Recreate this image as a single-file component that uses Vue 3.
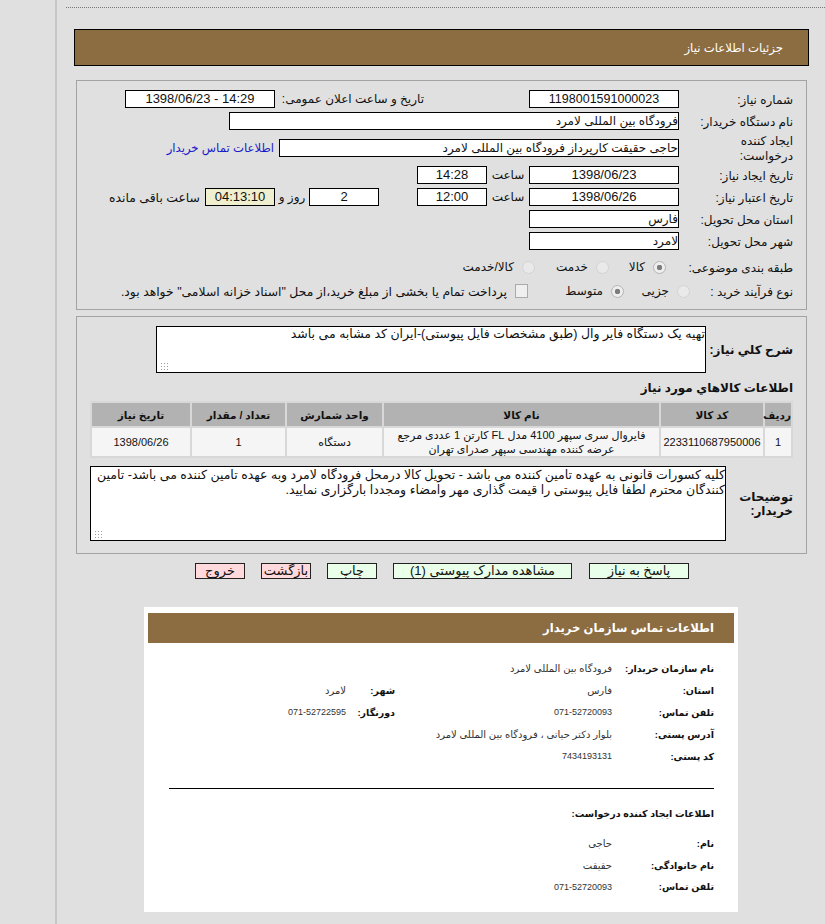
<script setup>
const items = [
  {
    row: "1",
    code: "2233110687950006",
    name: "فایروال سری سپهر 4100 مدل FL کارتن 1 عددی مرجع عرضه کننده مهندسی سپهر صدرای تهران",
    unit: "دستگاه",
    qty: "1",
    date: "1398/06/26",
  },
];

const buttons = [
  { text: "پاسخ به نیاز", cls: "go w-reply" },
  { text: "مشاهده مدارک پیوستی (1)", cls: "go w-docs" },
  { text: "چاپ", cls: "go w-small" },
  { text: "بازگشت", cls: "stop w-small" },
  { text: "خروج", cls: "stop w-small" },
];

const creator = [
  { label: "نام:", value: "حاجی", num: false },
  { label: "نام خانوادگی:", value: "حقیقت", num: false },
  { label: "تلفن تماس:", value: "071-52720093", num: true },
];
</script>

<template>
  <div class="page" dir="rtl">
    <div class="dots"></div>
    <div class="title">جزئیات اطلاعات نیاز</div>

    <section class="panel top">
      <div class="row">
        <label class="lbl">شماره نیاز:</label>
        <div class="box mid long">1198001591000023</div>
        <label class="pub">تاریخ و ساعت اعلان عمومی:</label>
        <div class="box mid">14:29 - 1398/06/23</div>
      </div>
      <div class="row">
        <label class="lbl">نام دستگاه خریدار:</label>
        <div class="box start w-org">فرودگاه بین المللی لامرد</div>
      </div>
      <div class="row tall">
        <label class="lbl">ایجاد کننده درخواست:</label>
        <div class="box start w-creator">حاجی حقیقت کارپرداز فرودگاه بین المللی لامرد</div>
        <a class="link">اطلاعات تماس خریدار</a>
      </div>
      <div class="row">
        <label class="lbl">تاریخ ایجاد نیاز:</label>
        <div class="box mid">1398/06/23</div>
        <span class="hour">ساعت</span>
        <div class="box time">14:28</div>
      </div>
      <div class="row">
        <label class="lbl">تاریخ اعتبار نیاز:</label>
        <div class="box mid">1398/06/26</div>
        <span class="hour">ساعت</span>
        <div class="box time">12:00</div>
        <div class="box days">2</div>
        <span class="day-text">روز و</span>
        <div class="box timer">04:13:10</div>
        <span class="left-text">ساعت باقی مانده</span>
      </div>
      <div class="row">
        <label class="lbl">استان محل تحویل:</label>
        <div class="box start mid-w">فارس</div>
      </div>
      <div class="row">
        <label class="lbl">شهر محل تحویل:</label>
        <div class="box start mid-w">لامرد</div>
      </div>
      <div class="row choice first">
        <label class="lbl w-cat">طبقه بندی موضوعی:</label>
        <input class="radio on" type="radio" disabled />
        <span class="opt w-kala">کالا</span>
        <input class="radio" type="radio" disabled />
        <span class="opt w-khedmat">خدمت</span>
        <input class="radio" type="radio" disabled />
        <span class="opt">کالا/خدمت</span>
      </div>
      <div class="row choice">
        <label class="lbl w-proc">نوع فرآیند خرید :</label>
        <input class="radio" type="radio" disabled />
        <span class="opt w-jozei">جزیی</span>
        <input class="radio on" type="radio" disabled />
        <span class="opt w-motavaset">متوسط</span>
        <input class="check" type="checkbox" disabled />
        <span class="opt note">پرداخت تمام یا بخشی از مبلغ خرید،از محل "اسناد خزانه اسلامی" خواهد بود.</span>
      </div>
    </section>

    <section class="panel bottom">
      <div class="desc">
        <label class="lbl-b w-need">شرح کلي نياز:</label>
        <div class="area-wrap">
          <textarea class="area area-need" readonly>تهیه یک دستگاه فایر وال (طبق مشخصات فایل پیوستی)-ایران کد مشابه می باشد</textarea>
        </div>
      </div>
      <h3 class="goods">اطلاعات کالاهاي مورد نياز</h3>
      <table class="goods-table">
        <thead>
          <tr>
            <th class="c-row">ردیف</th>
            <th class="c-code">کد کالا</th>
            <th class="c-name">نام کالا</th>
            <th class="c-unit">واحد شمارش</th>
            <th class="c-qty">تعداد / مقدار</th>
            <th>تاریخ نیاز</th>
          </tr>
        </thead>
        <tbody>
          <tr v-for="item in items" :key="item.code">
            <td>{{ item.row }}</td>
            <td>{{ item.code }}</td>
            <td>{{ item.name }}</td>
            <td>{{ item.unit }}</td>
            <td>{{ item.qty }}</td>
            <td>{{ item.date }}</td>
          </tr>
        </tbody>
      </table>
      <div class="desc buyer">
        <label class="lbl-b w-buyer">توضیحات خریدار:</label>
        <div class="area-wrap">
          <textarea class="area area-buyer" readonly>کلیه کسورات قانونی به عهده تامین کننده می باشد - تحویل کالا درمحل فرودگاه لامرد وبه عهده تامین کننده می باشد- تامین کنندگان محترم لطفا فایل پیوستی را قیمت گذاری مهر وامضاء ومجددا بارگزاری نمایید.</textarea>
        </div>
      </div>
    </section>

    <div class="actions">
      <button v-for="b in buttons" :key="b.text" type="button" :class="b.cls">{{ b.text }}</button>
    </div>

    <section class="card">
      <div class="card-head">اطلاعات تماس سازمان خریدار</div>
      <div class="card-body">
        <div class="c-line">
          <b class="c-lbl">نام سازمان خریدار:</b>
          <span class="c-val">فرودگاه بین المللی لامرد</span>
        </div>
        <div class="c-line">
          <b class="c-lbl">استان:</b>
          <span class="c-val wide">فارس</span>
          <b class="c-lbl2">شهر:</b>
          <span class="c-val">لامرد</span>
        </div>
        <div class="c-line">
          <b class="c-lbl">تلفن تماس:</b>
          <span class="c-val wide num">071-52720093</span>
          <b class="c-lbl2">دورنگار:</b>
          <span class="c-val num">071-52722595</span>
        </div>
        <div class="c-line">
          <b class="c-lbl">آدرس پستی:</b>
          <span class="c-val">بلوار دکتر حیاتی ، فرودگاه بین المللی لامرد</span>
        </div>
        <div class="c-line">
          <b class="c-lbl">کد پستی:</b>
          <span class="c-val num">7434193131</span>
        </div>
        <hr class="rule" />
        <h4 class="sub">اطلاعات ایجاد کننده درخواست:</h4>
        <div v-for="c in creator" :key="c.label" class="c-line tight">
          <b class="c-lbl">{{ c.label }}</b>
          <span class="c-val" :class="{ num: c.num }">{{ c.value }}</span>
        </div>
      </div>
    </section>
  </div>
</template>

<style>
html,
body {
  background: #e0e0e0;
}
</style>

<style scoped>
.page {
  box-sizing: border-box;
  width: 770px;
  min-height: 924px;
  margin-left: 55px;
  border-left: 2px solid #c6c6c6;
  padding: 7px 0 12px;
  direction: rtl;
  font-family: "Liberation Sans", "DejaVu Sans", sans-serif;
  font-size: 12px;
  color: #111;
  overflow: hidden;
}

.dots {
  height: 0;
  margin-left: 9px;
  border-top: 1px dotted #777;
}

.title {
  box-sizing: border-box;
  height: 37px;
  margin: 21px 16px 0 17px;
  padding-right: 25px;
  background: #8c6c41;
  border: 1px solid #000;
  color: #fff;
  line-height: 36px;
  font-size: 11.7px;
}

.panel {
  box-sizing: border-box;
  margin: 0 18px 0 19px;
  border: 1px solid #a3a3a3;
}

.panel.top {
  height: 230px;
  margin-top: 14px;
  padding-top: 7px;
}

.panel.bottom {
  height: 238px;
  margin-top: 6px;
  padding-top: 9px;
}

.row {
  display: flex;
  align-items: center;
  height: 22px;
  padding-right: 13px;
}

.row.tall {
  height: 32px;
}

.row.choice {
  height: 24px;
}

.row.first {
  margin-top: 3px;
}

.lbl {
  box-sizing: border-box;
  flex: none;
  width: 114px;
  padding-top: 2px;
  padding-left: 8px;
  line-height: 15px;
}

.lbl.w-cat {
  width: 127px;
  padding-left: 0;
}

.lbl.w-proc {
  width: 103px;
  padding-left: 0;
}

.box {
  box-sizing: border-box;
  flex: none;
  height: 18px;
  background: #fff;
  border: 1px solid #000;
  line-height: 16px;
  font-size: 13px;
}

.box.start {
  font-size: 12px;
}

.box.long {
  font-size: 12.5px;
}

.mid {
  width: 150px;
  text-align: center;
}

.mid-w {
  width: 150px;
}

.pub {
  flex: none;
  width: 149px;
  margin-right: 105px;
  white-space: nowrap;
}

.w-org {
  width: 450px;
}

.w-creator {
  width: 400px;
}

.link {
  margin-right: 5px;
  color: #1a1acb;
  font-size: 11.7px;
}

.hour {
  flex: none;
  width: 42px;
  text-align: center;
}

.time {
  width: 70px;
  text-align: center;
}

.days {
  width: 70px;
  margin-right: 38px;
  text-align: center;
}

.day-text {
  flex: none;
  width: 34px;
  text-align: center;
}

.timer {
  width: 70px;
  background: #efefcf;
  text-align: center;
}

.left-text {
  margin-right: 5px;
  font-size: 12.4px;
}

.radio,
.check {
  appearance: none;
  box-sizing: border-box;
  flex: none;
  width: 13px;
  height: 13px;
  margin: 0;
  background: #e9e9e9;
  border: 1px solid #d3d3d3;
}

.radio {
  border-radius: 50%;
}

.radio.on {
  background: radial-gradient(circle, #7d7d7d 0 2.5px, #eee 3px);
  border-color: #b5b5b5;
}

.check {
  height: 14px;
  background: #efefef;
  border-color: #aaa;
}

.opt {
  flex: none;
  box-sizing: border-box;
  margin-right: 8px;
}

.note {
  font-size: 12.4px;
}

.w-kala {
  width: 36px;
}

.w-khedmat {
  width: 53px;
}

.w-jozei {
  width: 45px;
}

.w-motavaset {
  width: 75px;
}

.desc {
  display: flex;
  align-items: center;
  padding-right: 13px;
}

.lbl-b {
  flex: none;
  font-weight: bold;
  line-height: 14px;
}

.w-need {
  width: 87px;
}

.w-buyer {
  width: 67px;
}

.area-wrap {
  position: relative;
  flex: none;
}

/* dotted resize grip in the lower left corner */
.area-wrap::after {
  content: "";
  position: absolute;
  left: 4px;
  bottom: 2px;
  width: 8px;
  height: 9px;
  background-image: radial-gradient(circle, #9c9c9c 0 0.8px, transparent 1px);
  background-size: 3px 3px;
}

.area {
  box-sizing: border-box;
  display: block;
  margin: 0;
  padding: 0 0 0 2px;
  background: #fff;
  border: 1px solid #000;
  border-radius: 0;
  outline: none;
  font-family: inherit;
  font-size: 12.5px;
  line-height: 15px;
  color: #111;
  overflow: hidden;
  resize: none;
}

.area-need {
  width: 550px;
  height: 47px;
}

.area-buyer {
  width: 636px;
  height: 75px;
  padding-top: 1px;
}

.buyer {
  margin-top: 8px;
}

.goods {
  height: 16px;
  margin: 7px 13px 5px 0;
  font-size: 12px;
  line-height: 16px;
}

.goods-table {
  box-sizing: border-box;
  width: 703px;
  margin-right: 13px;
  background: #d8d8d8;
  border-collapse: separate;
  border-spacing: 2px;
  table-layout: fixed;
}

.goods-table th {
  height: 23px;
  padding: 0;
  background: #b2b2b2;
  font-size: 10.5px;
}

.goods-table td {
  height: 28px;
  padding: 0 2px;
  background: #f5f5f5;
  text-align: center;
  font-size: 11px;
  line-height: 14px;
}

.c-row {
  width: 26px;
}

.c-code {
  width: 102px;
}

.c-name {
  width: 275px;
}

.c-unit {
  width: 95px;
}

.c-qty {
  width: 93px;
}

.actions {
  display: flex;
  gap: 16px;
  height: 16px;
  margin-top: 9px;
  padding-right: 136px;
}

.actions button {
  box-sizing: border-box;
  flex: none;
  height: 16px;
  margin: 0;
  padding: 0;
  border: 1px solid #222;
  border-radius: 0;
  font-family: inherit;
  font-size: 13px;
  line-height: 14px;
  color: #111;
}

.go {
  background: #e9ffe9;
}

.stop {
  background: #ffd9dc;
}

.actions .w-reply {
  width: 100px;
  margin-left: 1px;
}

.w-docs {
  width: 179px;
}

.w-small {
  width: 50px;
}

.card {
  box-sizing: border-box;
  width: 594px;
  height: 305px;
  margin: 28px 87px 0 0;
  padding: 6px 4px 0;
  background: #fff;
}

.card-head {
  box-sizing: border-box;
  height: 30px;
  padding-right: 20px;
  background: #8c6c41;
  color: #fff;
  font-size: 11.6px;
  font-weight: bold;
  line-height: 30px;
}

.card-body {
  padding: 14px 20px 0 0;
}

.c-line {
  display: flex;
  align-items: center;
  height: 22px;
  font-size: 9.5px;
  white-space: nowrap;
}

.c-line.tight {
  height: 21.5px;
}

.c-lbl {
  flex: none;
  width: 102px;
}

.c-lbl2 {
  flex: none;
  width: 49px;
}

.c-val {
  color: #333;
  font-size: 10px;
}

.c-val.num {
  font-size: 9px;
}

.c-val.wide {
  flex: none;
  width: 217px;
}

.rule {
  width: 545px;
  height: 0;
  margin: 21px 0 0;
  border: 0;
  border-top: 1px solid #000;
}

.sub {
  height: 20px;
  margin: 15px 0 9px;
  font-size: 9.5px;
  line-height: 20px;
}
</style>
